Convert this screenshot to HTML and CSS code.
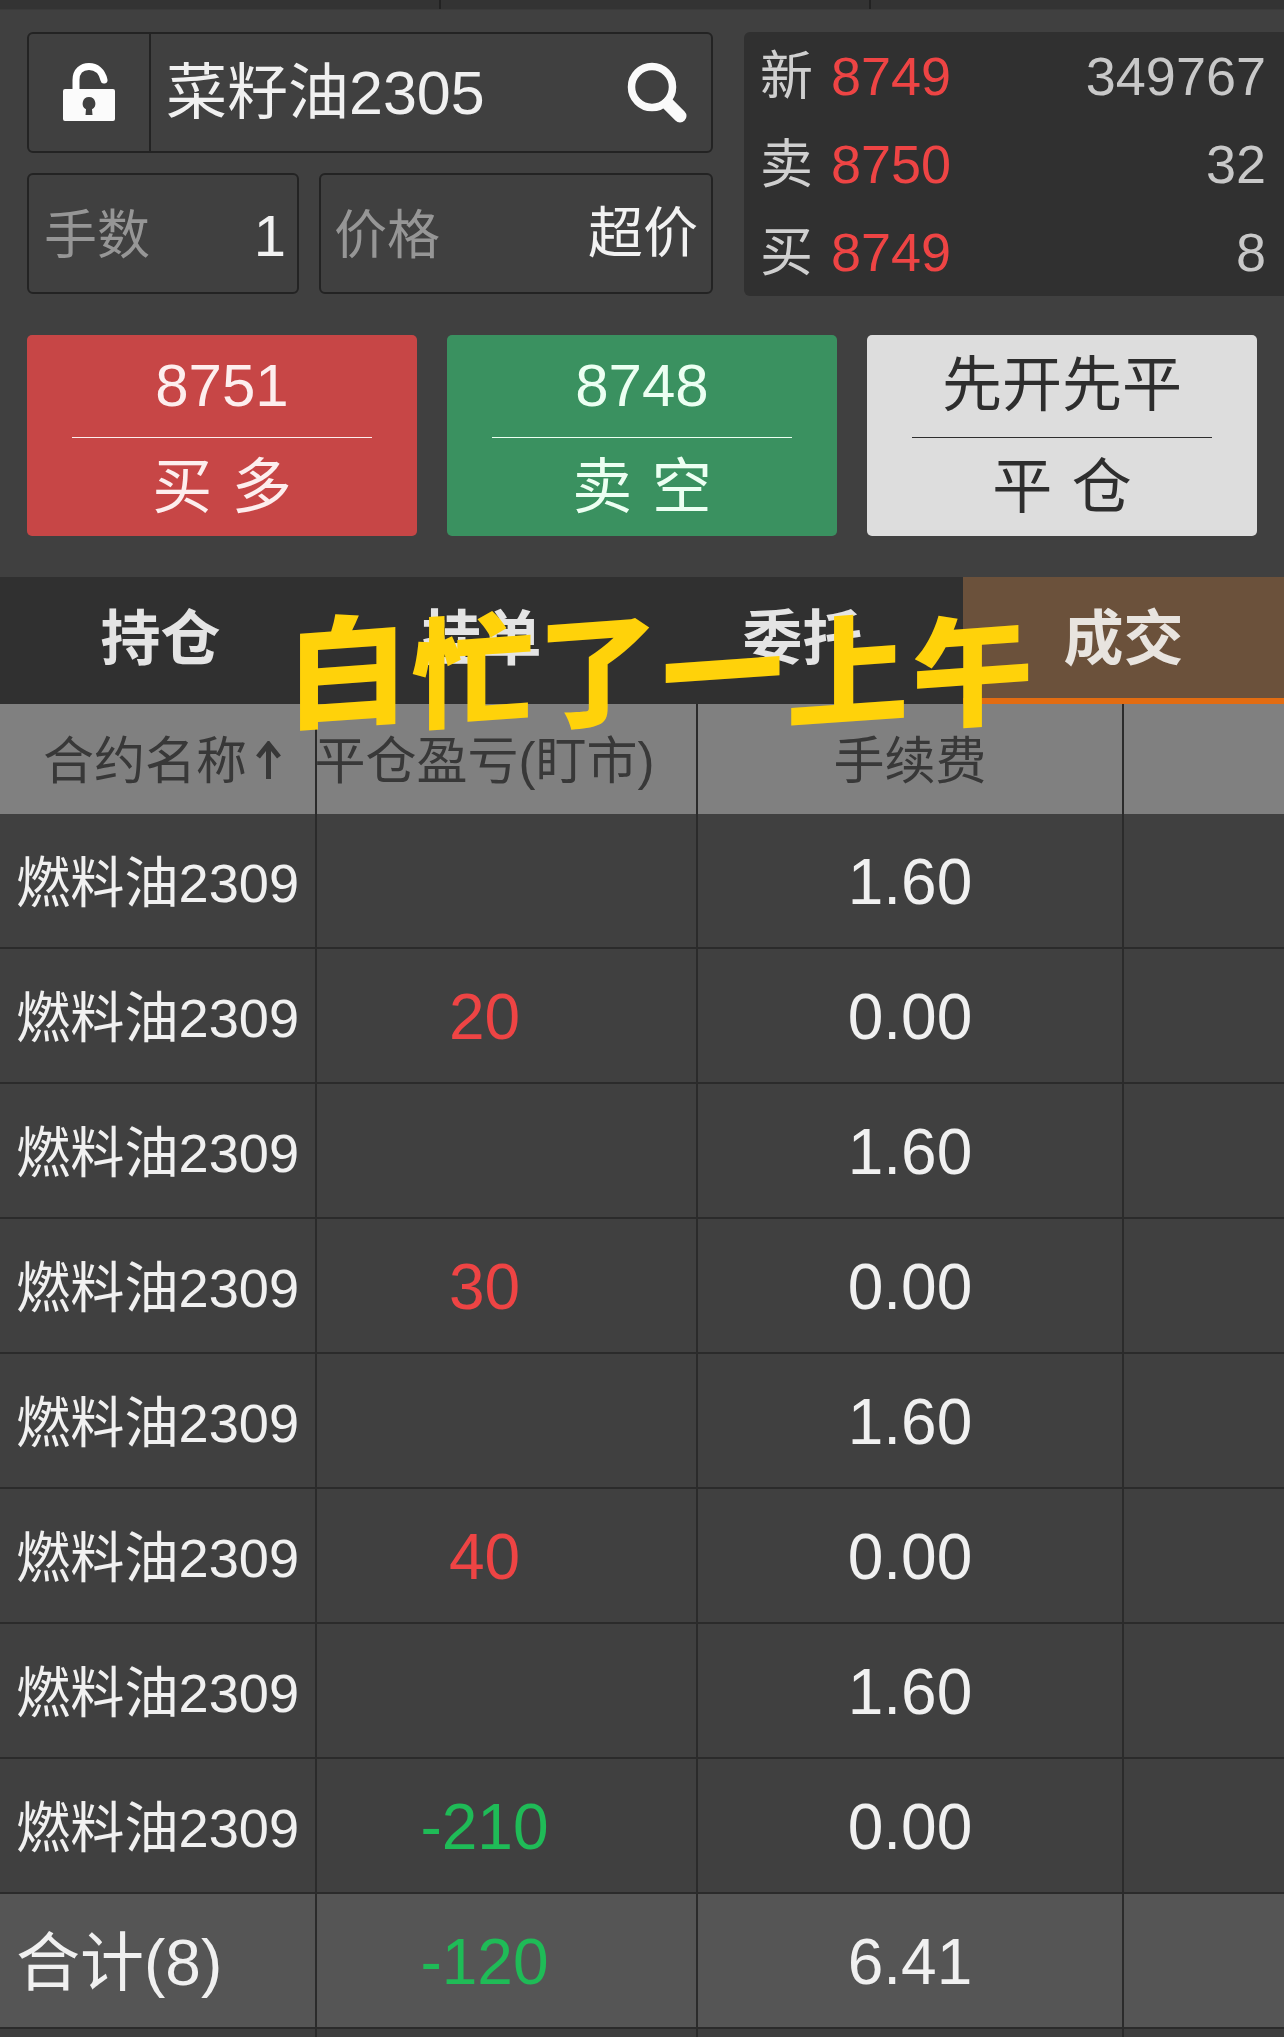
FILE: index.html
```html
<!DOCTYPE html>
<html lang="zh-CN">
<head>
<meta charset="utf-8">
<title>成交</title>
<link rel="stylesheet" href="styles.css">
</head>
<body>
<div class="page">
  <div class="topstrip"><i></i><i></i><i></i></div>

  <section class="order">
    <div class="form">
      <div class="field search">
        <div class="lock">
          <svg class="lock-icon" viewBox="0 0 52 58" aria-hidden="true">
            <path class="shackle" d="M13 28V17C13 8 19 3.500 26 3.500S39 8 41 17" />
            <path class="body" fill-rule="evenodd" d="M2 26H50a2 2 0 0 1 2 2V56a2 2 0 0 1-2 2H2a2 2 0 0 1-2-2V28a2 2 0 0 1 2-2ZM26 34a6.500 6.500 0 0 0-3 12.200l-.5 5.800h7l-.5-5.800a6.500 6.500 0 0 0-3-12.200Z"/>
          </svg>
        </div>
        <div class="symbol">菜籽油2305</div>
        <svg class="search-icon" viewBox="0 0 60 62" aria-hidden="true">
          <circle class="lens" cx="25" cy="25" r="20.5"/>
          <path class="handle" d="M41 42L53 54"/>
        </svg>
      </div>
      <div class="form-row">
        <div class="field lots"><span class="hint">手数</span><span class="val val-lots">1</span></div>
        <div class="field price"><span class="hint">价格</span><span class="val">超价</span></div>
      </div>
    </div>
    <div class="quote">
      <div class="qrow"><span class="qlabel">新</span><span class="qprice">8749</span><span class="qvol">349767</span></div>
      <div class="qrow"><span class="qlabel">卖</span><span class="qprice">8750</span><span class="qvol">32</span></div>
      <div class="qrow"><span class="qlabel">买</span><span class="qprice">8749</span><span class="qvol">8</span></div>
    </div>
  </section>

  <section class="actions">
    <div class="btn btn-buy"><div class="btn-top">8751</div><div class="btn-line"></div><div class="btn-bot">买 多</div></div>
    <div class="btn btn-sell"><div class="btn-top">8748</div><div class="btn-line"></div><div class="btn-bot">卖 空</div></div>
    <div class="btn btn-close"><div class="btn-top">先开先平</div><div class="btn-line"></div><div class="btn-bot">平 仓</div></div>
  </section>

  <nav class="tabs">
    <div class="tab">持仓</div>
    <div class="tab">挂单</div>
    <div class="tab">委托</div>
    <div class="tab tab-on">成交</div>
  </nav>

  <div class="table">
    <div class="row head">
      <div class="cell name">合约名称<svg class="sort" viewBox="0 0 27 40" aria-hidden="true"><path d="M13.500 38V4M3 16L13.500 3L24 16"/></svg></div>
      <div class="cell pnl">平仓盈亏(盯市)</div>
      <div class="cell fee">手续费</div>
      <div class="cell"></div>
    </div>
    <div class="row"><div class="cell name">燃料油2309</div><div class="cell pnl"></div><div class="cell fee">1.60</div><div class="cell"></div></div>
    <div class="row"><div class="cell name">燃料油2309</div><div class="cell pnl up">20</div><div class="cell fee">0.00</div><div class="cell"></div></div>
    <div class="row"><div class="cell name">燃料油2309</div><div class="cell pnl"></div><div class="cell fee">1.60</div><div class="cell"></div></div>
    <div class="row"><div class="cell name">燃料油2309</div><div class="cell pnl up">30</div><div class="cell fee">0.00</div><div class="cell"></div></div>
    <div class="row"><div class="cell name">燃料油2309</div><div class="cell pnl"></div><div class="cell fee">1.60</div><div class="cell"></div></div>
    <div class="row"><div class="cell name">燃料油2309</div><div class="cell pnl up">40</div><div class="cell fee">0.00</div><div class="cell"></div></div>
    <div class="row"><div class="cell name">燃料油2309</div><div class="cell pnl"></div><div class="cell fee">1.60</div><div class="cell"></div></div>
    <div class="row"><div class="cell name">燃料油2309</div><div class="cell pnl down">-210</div><div class="cell fee">0.00</div><div class="cell"></div></div>
    <div class="row total"><div class="cell name">合计(8)</div><div class="cell pnl down">-120</div><div class="cell fee">6.41</div><div class="cell"></div></div>
    <div class="row tail"><div class="cell"></div><div class="cell"></div><div class="cell"></div><div class="cell"></div></div>
  </div>

  <div class="caption"><span>白</span><span>忙</span><span>了</span><span>一</span><span>上</span><span>午</span></div>
</div>
</body>
</html>
```
FILE: styles.css
```css
* { box-sizing: border-box; }
html, body { margin: 0; padding: 0; background: #404040; }
body { font-family: "Liberation Sans", "Noto Sans CJK SC", sans-serif; }
.page { position: relative; width: 1284px; height: 2037px; overflow: hidden; background: #404040; }

.topstrip { display: grid; grid-template-columns: 441px 430px 1fr; height: 10px; background: #333; border-bottom: 1px solid #3a3a3a; }
.topstrip i { border-right: 2px solid #222; }
.topstrip i:last-child { border-right: 0; }

.order { display: flex; justify-content: space-between; padding: 22px 0 0 27px; }
.form { width: 686px; display: flex; flex-direction: column; gap: 20px; }
.form-row { display: flex; gap: 20px; }
.field { height: 121px; border: 2.5px solid #232323; border-radius: 6px; display: flex; align-items: center; }
.search { position: relative; }
.lock { width: 122px; height: 100%; border-right: 2.5px solid #232323; display: flex; align-items: center; justify-content: center; }
.lock-icon { width: 52px; height: 58px; margin-top: -2px; }
.shackle { fill: none; stroke: #fff; stroke-width: 7; stroke-linecap: round; }
.body { fill: #fbfbfb; }
.symbol { flex: 1; padding: 2px 0 0 15px; font-size: 61px; line-height: 1; color: #f0f0f0; }
.search-icon { width: 60px; height: 62px; margin-right: 24px; }
.lens { fill: none; stroke: #fafafa; stroke-width: 7.5; }
.handle { fill: none; stroke: #fafafa; stroke-width: 13; stroke-linecap: round; }
.lots { width: 272px; justify-content: space-between; padding: 0 11px 0 15px; }
.price { width: 394px; justify-content: space-between; padding: 0 13px 0 13px; }
.hint { padding-top: 4px; font-size: 53px; line-height: 1; color: #969696; }
.val { font-size: 55px; line-height: 1; color: #f2f2f2; }
.val-lots { padding-top: 4px; font-size: 58px; }

.quote { width: 540px; height: 264px; background: #303030; border-radius: 6px 0 0 6px; padding: 0 18px 0 16px; display: flex; flex-direction: column; }
.qrow { flex: 1; display: flex; align-items: center; font-size: 54px; line-height: 1; }
.qlabel { width: 71px; color: #cfcfcf; font-size: 53px; }
.qprice { color: #ee4444; }
.qvol { margin-left: auto; color: #c8c8c8; }

.actions { display: flex; gap: 30px; padding: 39px 0 0 27px; }
.btn { width: 390px; height: 201px; border-radius: 5px; display: flex; flex-direction: column; align-items: center; font-size: 60px; line-height: 1; }
.btn-top { height: 102px; padding-top: 21px; }
.btn-line { width: 300px; height: 1px; flex: none; background: currentColor; }
.btn-bot { flex: 1; padding-top: 20px; word-spacing: 3px; }
.btn-buy { background: #c74646; color: #fdeeee; }
.btn-sell { background: #3a9160; color: #ecfff2; }
.btn-close { background: #dddddd; color: #2e2e2e; }

.tabs { display: flex; height: 127px; margin-top: 41px; background: #303030; }
.tab { flex: 1; display: flex; align-items: center; justify-content: center; padding-bottom: 2px; font-size: 60px; font-weight: 700; line-height: 1; color: #e4e4e4; }
.tab-on { background: #6b513b; border-bottom: 6px solid #e26c12; padding-bottom: 0; padding-top: 4px; color: #e8e4df; }

.row { display: grid; grid-template-columns: 317px 381px 426px 160px; height: 135px; border-bottom: 2px solid #2b2b2b; background: #404040; }
.cell { border-right: 2px solid #2b2b2b; display: flex; align-items: center; white-space: nowrap; line-height: 1; font-size: 64px; color: #f0f0f0; padding-top: 2px; }
.cell:last-child { border-right: 0; }
.name { padding: 5px 0 0 16px; font-size: 54.2px; }
.pnl { justify-content: center; padding-right: 44px; }
.fee { justify-content: center; }
.up { color: #ee4444; }
.down { color: #1fbb57; }
.head { height: 110px; background: #808080; border-bottom: 0; }
.head .cell { font-size: 51px; color: #383838; padding-top: 4px; }
.head .name { padding-left: 43px; }
.sort { width: 27px; height: 40px; margin-left: 8px; flex: none; }
.sort path { fill: none; stroke: #383838; stroke-width: 5; }
.total { background: #555555; }
.total .name { font-size: 64px; padding-top: 4px; }
.tail { height: 12px; border-bottom: 0; background: #3e3e3e; }

.caption { position: absolute; left: 285px; top: 611px; display: flex; font-size: 122px; font-weight: 900; line-height: 1.05; color: #ffd20a; }
.caption span { display: block; width: 125px; text-align: center; transform: skewY(-4deg) scaleY(0.98); }
```
